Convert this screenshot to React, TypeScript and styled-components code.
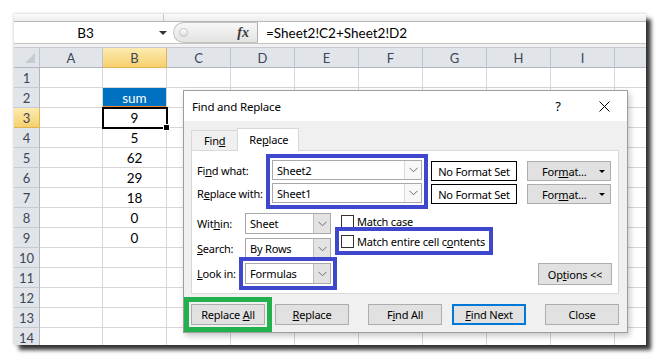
import React from 'react';
import styled, { createGlobalStyle, css } from 'styled-components';

const GlobalStyle = createGlobalStyle`
    html, body {
        margin: 0;
        background: #fff;
    }
    body {
        width: 660px;
        height: 360px;
        overflow: hidden;
    }
    * {
        box-sizing: border-box;
    }
`;

const SHEET_FONT = `Lato, "Liberation Sans", sans-serif`;
const UI_FONT = `"Noto Sans", "Liberation Sans", sans-serif`;
const NOTE_BLUE = '#3f48cc';
const NOTE_GREEN = '#22b14c';

const Page = styled.div`
    padding: 14px 0 0 14px;
`;

const Window = styled.div`
    position: relative;
    width: 632px;
    height: 331px;
    background: #fff;
    display: flex;
    flex-direction: column;
    box-shadow: 5px 5px 4px rgba(0, 0, 0, 0.78), 0 0 3px rgba(0, 0, 0, 0.25);
`;

const RibbonTail = styled.div`
    height: 8px;
    flex: none;
    background: linear-gradient(#fbfbfb, #ececec);
    border-bottom: 1px solid #b8b8b8;
    display: flex;

    span {
        width: 150px;
        border-right: 1px solid #c8c8c8;
    }
`;

const FormulaBar = styled.div`
    height: 22px;
    flex: none;
    display: flex;
    border-bottom: 1px solid #c4c4c4;
    font-family: ${SHEET_FONT};
    font-size: 13.5px;
    color: #000;
`;

const NameBox = styled.div`
    width: 159px;
    position: relative;
    display: flex;
    align-items: center;
    justify-content: center;
    padding-right: 16px;

    &::after {
        content: '';
        position: absolute;
        right: 6px;
        top: 9px;
        border-left: 4px solid transparent;
        border-right: 4px solid transparent;
        border-top: 4px solid #333;
    }
`;

const FxPill = styled.div`
    width: 85px;
    display: flex;
    align-items: center;
    justify-content: space-between;
    padding: 0 8px 0 5px;
    border: 1px solid #c2c2c2;
    border-right-color: #b0b0b0;
    border-radius: 11px 0 0 11px;
    background: linear-gradient(#f7f7f7, #e3e3e3);
`;

const Knob = styled.span`
    width: 9px;
    height: 9px;
    border-radius: 50%;
    border: 1px solid #c4c4c4;
    background: linear-gradient(#ffffff, #dcdcdc);
`;

const Fx = styled.span`
    font-family: "Liberation Serif", serif;
    font-style: italic;
    font-weight: bold;
    font-size: 14px;
    color: #3a3a3a;
`;

const FormulaText = styled.div`
    flex: 1;
    display: flex;
    align-items: center;
    padding-left: 8px;
`;

const BarGap = styled.div`
    height: 3px;
    flex: none;
    background: #f1f1f1;
`;

const Grid = styled.div`
    flex: 1;
    overflow: hidden;
    display: grid;
    grid-template-columns: 26px 63px repeat(9, 64px);
    grid-auto-rows: 20px;
    font-family: ${SHEET_FONT};
    border-top: 1px solid #c4c9d0;
`;

const activeHead = css`
    background: linear-gradient(#fcebb0, #f6d06e);
    border-color: #e0b453;
`;

const ColHead = styled.div<{ $active?: boolean }>`
    display: flex;
    align-items: center;
    justify-content: center;
    background: #e1e5ea;
    border-right: 1px solid #bdc4cd;
    border-bottom: 1px solid #aeb6c1;
    font-size: 13px;
    color: #3b4658;
    ${({ $active }) => $active && activeHead}
`;

const Corner = styled(ColHead)`
    position: relative;

    &::after {
        content: '';
        position: absolute;
        right: 4px;
        bottom: 4px;
        border-left: 10px solid transparent;
        border-bottom: 10px solid #c6cbd2;
    }
`;

const RowHead = styled.div<{ $active?: boolean }>`
    display: flex;
    align-items: center;
    justify-content: center;
    background: #e1e5ea;
    border-right: 1px solid #aeb6c1;
    border-bottom: 1px solid #c4cad2;
    font-size: 13px;
    color: #3b4658;
    ${({ $active }) => $active && activeHead}
`;

const Cell = styled.div<{ $tone?: 'sum' | 'active' }>`
    position: relative;
    display: flex;
    align-items: center;
    justify-content: center;
    border-right: 1px solid #d6d6d6;
    border-bottom: 1px solid #d6d6d6;
    font-size: 13.5px;
    color: #000;

    ${({ $tone }) => $tone === 'sum' && css`
        background: #0070c0;
        color: #fff;
        border-bottom: 2px solid #f0893a;
        padding-top: 1px;
    `}

    ${({ $tone }) => $tone === 'active' && css`
        z-index: 1;
        outline: 2px solid #000;
        outline-offset: -1px;

        &::after {
            content: '';
            position: absolute;
            right: -4px;
            bottom: -4px;
            width: 5px;
            height: 5px;
            background: #000;
            border: 1px solid #fff;
        }
    `}
`;

/* ---------- dialog ---------- */

const Dialog = styled.div`
    position: absolute;
    left: 169px;
    top: 76px;
    width: 445px;
    height: 243px;
    border: 1px solid #9d9d9d;
    background: #f0f0f0;
    box-shadow: 2px 3px 6px rgba(0, 0, 0, 0.22);
    display: flex;
    flex-direction: column;
    font-family: ${UI_FONT};
    font-size: 11px;
    letter-spacing: -0.2px;
    color: #000;
    z-index: 5;
`;

const TitleBar = styled.div`
    height: 30px;
    flex: none;
    background: #fff;
    display: flex;
    align-items: center;
    padding-left: 8px;
    font-size: 11.5px;
`;

const Caption = styled.div`
    width: 46px;
    height: 30px;
    display: flex;
    align-items: center;
    justify-content: center;
    font-size: 13px;
`;

const HelpCaption = styled(Caption)`
    margin-left: auto;
`;

const Body = styled.div`
    flex: 1;
    padding: 7px 8px 0 7px;
    display: flex;
    flex-direction: column;
`;

const TabBar = styled.div`
    height: 22px;
    display: flex;
    align-items: flex-end;
`;

const Tab = styled.div<{ $active?: boolean }>`
    position: relative;
    height: 20px;
    padding: 0 12px;
    display: flex;
    align-items: center;
    border: 1px solid #d9d9d9;
    border-bottom: none;
    background: #f0f0f0;
    ${({ $active }) => $active && css`
        margin-bottom: -1px;
        margin-left: -1px;
        height: 23px;
        padding: 0 10px 2px 11px;
        background: #fff;
        z-index: 1;
    `}
`;

const Panel = styled.div`
    height: 144px;
    border: 1px solid #d9d9d9;
    background: #fff;
    padding: 9px 6px 8px 5px;
    display: flex;
    flex-direction: column;
`;

const FindRows = styled.div`
    display: flex;
    align-items: flex-start;
`;

const Stack = styled.div<{ $width: number; $gap: number; $offset?: number }>`
    width: ${({ $width }) => $width}px;
    margin-left: ${({ $offset }) => $offset || 0}px;
    display: flex;
    flex-direction: column;
    gap: ${({ $gap }) => $gap}px;
    flex: none;
`;

const Label = styled.div<{ $height: number }>`
    height: ${({ $height }) => $height}px;
    display: flex;
    align-items: center;
    white-space: nowrap;
`;

const Flagged = styled.div`
    outline: 4px solid ${NOTE_BLUE};
    outline-offset: 2px;
`;

const Field = styled.div<{ $height: number; $flagged?: boolean; $dark?: boolean }>`
    height: ${({ $height }) => $height}px;
    display: flex;
    border: 1px solid #a9a9a9;
    background: #fff;
    ${({ $flagged }) => $flagged && css`
        outline: 4px solid ${NOTE_BLUE};
        outline-offset: 2px;
    `}

    span.value {
        flex: 1;
        display: flex;
        align-items: center;
        padding-left: 4px;
        white-space: nowrap;
    }

    span.drop {
        width: 17px;
        display: flex;
        align-items: center;
        justify-content: center;
        border-left: 1px solid ${({ $dark }) => ($dark ? '#bdbdbd' : '#dadada')};
        background: ${({ $dark }) => ($dark ? '#e3e3e3' : '#f8f8f8')};
    }
`;

const FormatBox = styled.div`
    height: 20px;
    margin-top: 1px;
    margin-bottom: -1px;
    display: flex;
    align-items: center;
    justify-content: center;
    border: 1px solid #000;
    background: #fff;
    white-space: nowrap;
`;

const Button = styled.div<{ $width: number; $height: number; $offset?: number; $focused?: boolean; $marked?: boolean }>`
    width: ${({ $width }) => $width}px;
    height: ${({ $height }) => $height}px;
    margin-left: ${({ $offset }) => $offset || 0}px;
    flex: none;
    display: flex;
    align-items: center;
    justify-content: center;
    background: #e1e1e1;
    border: 1px solid #adadad;
    white-space: nowrap;
    ${({ $focused }) => $focused && css`
        border: 2px solid #0078d7;
    `}
    ${({ $marked }) => $marked && css`
        outline: 5px solid ${NOTE_GREEN};
        outline-offset: 2px;
    `}
`;

const FormatButton = styled(Button)`
    margin-top: 1px;
    margin-bottom: -1px;
    padding: 0 5px 0 14px;
    justify-content: space-between;

    &::after {
        content: '';
        border-left: 3px solid transparent;
        border-right: 3px solid transparent;
        border-top: 3px solid #000;
    }
`;

const OptionRows = styled.div`
    margin-top: 10px;
    flex: 1;
    display: flex;
    align-items: flex-start;
`;

const SelectGrid = styled.div`
    display: grid;
    grid-template-columns: 48px 86px;
    grid-auto-rows: 21px;
    row-gap: 4px;
`;

const CheckRow = styled.div<{ $flagged?: boolean }>`
    align-self: flex-start;
    height: 16px;
    display: flex;
    align-items: center;
    gap: 3px;
    padding-right: 2px;
    white-space: nowrap;
    ${({ $flagged }) => $flagged && css`
        outline: 4px solid ${NOTE_BLUE};
        outline-offset: 2px;
    `}
`;

const Box = styled.span`
    flex: none;
    width: 13px;
    height: 13px;
    border: 1px solid #333;
    background: #fff;
`;

const OptionsButton = styled(Button)`
    margin-left: auto;
    align-self: flex-end;
`;

const ButtonRow = styled.div`
    margin-top: 10px;
    display: flex;
`;

const Chevron = () => (
    <svg width="9" height="6" viewBox="0 0 9 6">
        <path d="M0.5 0.8 L4.5 4.8 L8.5 0.8" fill="none" stroke="#6d6d6d" strokeWidth="1" />
    </svg>
);

const CloseGlyph = () => (
    <svg width="11" height="11" viewBox="0 0 11 11">
        <path d="M0.5 0.5 L10.5 10.5 M10.5 0.5 L0.5 10.5" stroke="#000" strokeWidth="1" />
    </svg>
);

// underline one access-key letter
const Key = ({ text, at }: { text: string; at: number }) => (
    <span>
        {text.slice(0, at)}<u>{text[at]}</u>{text.slice(at + 1)}
    </span>
);

const columns = ['A', 'B', 'C', 'D', 'E', 'F', 'G', 'H', 'I', 'J'];
const values: Record<number, string> = { 3: '9', 4: '5', 5: '62', 6: '29', 7: '18', 8: '0', 9: '0' };
const rows = Array.from({ length: 14 }, (_, i) => i + 1);

const FindReplaceDialog = () => (
    <Dialog>
        <TitleBar>
            Find and Replace
            <HelpCaption>?</HelpCaption>
            <Caption><CloseGlyph /></Caption>
        </TitleBar>
        <Body>
            <TabBar>
                <Tab><Key text="Find" at={3} /></Tab>
                <Tab $active><Key text="Replace" at={2} /></Tab>
            </TabBar>
            <Panel>
                <FindRows>
                    <Stack $width={75} $gap={3}>
                        <Label $height={20}><Key text="Find what:" at={2} /></Label>
                        <Label $height={20}><Key text="Replace with:" at={1} /></Label>
                    </Stack>
                    <Flagged>
                        <Stack $width={150} $gap={3}>
                            <Field $height={20}>
                                <span className="value">Sheet2</span>
                                <span className="drop"><Chevron /></span>
                            </Field>
                            <Field $height={20}>
                                <span className="value">Sheet1</span>
                                <span className="drop"><Chevron /></span>
                            </Field>
                        </Stack>
                    </Flagged>
                    <Stack $width={86} $gap={3} $offset={9}>
                        <FormatBox>No Format Set</FormatBox>
                        <FormatBox>No Format Set</FormatBox>
                    </Stack>
                    <Stack $width={84} $gap={3} $offset={10}>
                        <FormatButton $width={84} $height={20}><Key text="Format..." at={3} /></FormatButton>
                        <FormatButton $width={84} $height={20}><Key text="Format..." at={3} /></FormatButton>
                    </Stack>
                </FindRows>
                <OptionRows>
                    <SelectGrid>
                        <Label $height={21}><Key text="Within:" at={3} /></Label>
                        <Field $height={21} $dark>
                            <span className="value">Sheet</span>
                            <span className="drop"><Chevron /></span>
                        </Field>
                        <Label $height={21}><Key text="Search:" at={0} /></Label>
                        <Field $height={21} $dark>
                            <span className="value">By Rows</span>
                            <span className="drop"><Chevron /></span>
                        </Field>
                        <Label $height={21}><Key text="Look in:" at={0} /></Label>
                        <Field $height={21} $dark $flagged>
                            <span className="value">Formulas</span>
                            <span className="drop"><Chevron /></span>
                        </Field>
                    </SelectGrid>
                    <Stack $width={160} $gap={4} $offset={10}>
                        <CheckRow><Box /><Key text="Match case" at={6} /></CheckRow>
                        <CheckRow $flagged><Box /><Key text="Match entire cell contents" at={19} /></CheckRow>
                    </Stack>
                    <OptionsButton $width={74} $height={22}><Key text="Options <<" at={2} /></OptionsButton>
                </OptionRows>
            </Panel>
            <ButtonRow>
                <Button $width={74} $height={21} $marked><Key text="Replace All" at={8} /></Button>
                <Button $width={74} $height={21} $offset={10}><Key text="Replace" at={0} /></Button>
                <Button $width={74} $height={21} $offset={19}><Key text="Find All" at={1} /></Button>
                <Button $width={74} $height={21} $offset={10} $focused><Key text="Find Next" at={0} /></Button>
                <Button $width={74} $height={21} $offset={19}>Close</Button>
            </ButtonRow>
        </Body>
    </Dialog>
);

const App = () => (
    <Page>
        <GlobalStyle />
        <Window>
            <RibbonTail><span /></RibbonTail>
            <FormulaBar>
                <NameBox>B3</NameBox>
                <FxPill>
                    <Knob />
                    <Fx>fx</Fx>
                </FxPill>
                <FormulaText>=Sheet2!C2+Sheet2!D2</FormulaText>
            </FormulaBar>
            <BarGap />
            <Grid>
                <Corner />
                {columns.map(c => <ColHead key={c} $active={c === 'B'}>{c === 'J' ? '' : c}</ColHead>)}
                {rows.map(r => (
                    <React.Fragment key={r}>
                        <RowHead $active={r === 3}>{r}</RowHead>
                        {columns.map(c => {
                            if (c !== 'B') return <Cell key={c} />;
                            if (r === 2) return <Cell key={c} $tone="sum">sum</Cell>;
                            return <Cell key={c} $tone={r === 3 ? 'active' : undefined}>{values[r] || ''}</Cell>;
                        })}
                    </React.Fragment>
                ))}
            </Grid>
            <FindReplaceDialog />
        </Window>
    </Page>
);

export default App;
